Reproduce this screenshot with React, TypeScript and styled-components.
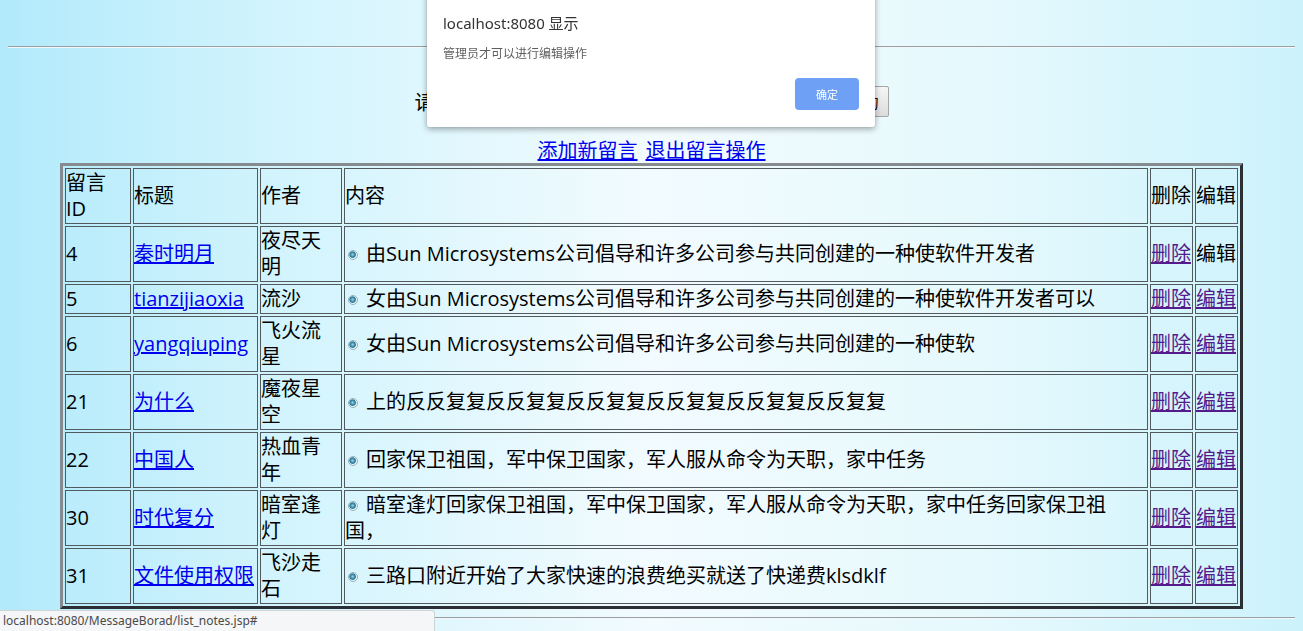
import React from 'react';
import styled, { createGlobalStyle } from 'styled-components';

const GlobalStyle = createGlobalStyle`
  html {
    min-height: 100%;
    background: linear-gradient(to right, #b2eafb 0%, #d3f4fd 22%, #f2fbfe 50%, #e6f9fd 75%, #ccf2fc 100%);
  }
  body {
    margin: 8px;
    font-family: "Open Sans", "Noto Sans CJK SC", sans-serif;
    color: #000;
  }
`;

const Rule = styled.hr<{ $top: number }>`
  margin: ${({ $top }) => $top}px 0 0;
  height: 0;
  border: none;
  border-top: 1px solid #9a9fa3;
  border-bottom: 1px solid #f2f8fa;
`;

const SearchRow = styled.form`
  display: flex;
  justify-content: center;
  align-items: center;
  margin-top: 38px;
  height: 31px;
  font-family: "Liberation Serif", "Noto Sans CJK SC", serif;
  font-size: 20px;
`;

const SearchInput = styled.input`
  width: 250px;
  height: 24px;
  margin: 0 4px;
  border: 1px solid #a9a9a9;
  background: #fff;
`;

const SearchButton = styled.button`
  width: 50px;
  height: 31px;
  border: 1px solid #a6a6a6;
  border-radius: 2px;
  background: linear-gradient(#f6f6f6, #dcdcdc);
  font-family: "Noto Sans CJK SC", sans-serif;
  font-size: 15px;
`;

const LinkBar = styled.div`
  display: flex;
  justify-content: center;
  gap: 8px;
  margin-top: 21px;
  font-family: "Noto Sans CJK SC", sans-serif;
  font-size: 20px;
  line-height: 24px;
`;

const PageLink = styled.a`
  color: #0000ee;
  text-decoration: underline;
`;

const Grid = styled.table`
  margin: 1px auto 0;
  width: 1183px;
  table-layout: fixed;
  border: 3px solid;
  border-color: #858b8f #2b2f33 #2b2f33 #858b8f;
  border-spacing: 2px;
  font-size: 20px;
  line-height: 26px;
`;

const Cell = styled.td<{ $w?: number }>`
  ${({ $w }) => ($w ? `width: ${$w}px;` : '')}
  box-sizing: border-box;
  padding: 1px 1px 1px 0;
  border: 1px solid #535a5e;
  vertical-align: middle;
  text-align: left;
  font-weight: normal;
  word-break: break-all;
`;

const ContentCell = styled(Cell)`
  padding-right: 7px;
`;

const TitleLink = styled.a`
  color: #0000ee;
  text-decoration: underline;
  white-space: nowrap;
`;

const ActionLink = styled.a`
  color: #551a8b;
  text-decoration: underline;
  white-space: nowrap;
`;

const Plain = styled.span`
  white-space: nowrap;
`;

const Bullet = styled.span`
  display: inline-block;
  width: 8px;
  height: 8px;
  margin: 0 8px 2px 3px;
  border-radius: 50%;
  border: 1px solid #9bb0b8;
  background: radial-gradient(circle at 45% 45%, #9fd3e6 0, #1d7594 45%, #e9f4f7 60%);
  vertical-align: middle;
`;

const Dialog = styled.div`
  position: fixed;
  left: 427px;
  top: -12px;
  width: 448px;
  height: 139px;
  box-sizing: border-box;
  padding: 24px 16px 0;
  background: #fff;
  border-radius: 2px;
  box-shadow: 0 2px 6px rgba(0, 0, 0, 0.35), 0 0 1px rgba(0, 0, 0, 0.3);
  font-family: "Noto Sans", "Noto Sans CJK SC", sans-serif;
`;

const DialogTitle = styled.div`
  font-size: 15px;
  line-height: 22px;
  color: #333;
`;

const DialogText = styled.div`
  margin-top: 11px;
  font-size: 12px;
  line-height: 18px;
  color: #5f5f5f;
`;

const DialogFooter = styled.div`
  display: flex;
  justify-content: flex-end;
  margin-top: 15px;
`;

const OkButton = styled.button`
  width: 64px;
  height: 32px;
  border: none;
  border-radius: 4px;
  background: #6ea0f6;
  color: #fff;
  font-family: "Noto Sans CJK SC", sans-serif;
  font-size: 11px;
`;

const StatusBar = styled.div`
  position: fixed;
  left: 0;
  bottom: 0;
  width: 431px;
  height: 20px;
  background: #f4f6f7;
  border-top: 1px solid #cfd4d6;
  border-right: 1px solid #cfd4d6;
  border-top-right-radius: 3px;
  padding-left: 3px;
  font-family: "Noto Sans", sans-serif;
  font-size: 12px;
  line-height: 20px;
  color: #4a4a4a;
`;

type Note = {
  id: number;
  title: string;
  author: string;
  content: string;
  editLink: boolean;
};

const notes: Note[] = [
  { id: 4, title: '秦时明月', author: '夜尽天明', content: '由Sun Microsystems公司倡导和许多公司参与共同创建的一种使软件开发者', editLink: false },
  { id: 5, title: 'tianzijiaoxia', author: '流沙', content: '女由Sun Microsystems公司倡导和许多公司参与共同创建的一种使软件开发者可以', editLink: true },
  { id: 6, title: 'yangqiuping', author: '飞火流星', content: '女由Sun Microsystems公司倡导和许多公司参与共同创建的一种使软', editLink: true },
  { id: 21, title: '为什么', author: '魔夜星空', content: '上的反反复复反反复复反反复复反反复复反反复复反反复复', editLink: true },
  { id: 22, title: '中国人', author: '热血青年', content: '回家保卫祖国，军中保卫国家，军人服从命令为天职，家中任务', editLink: true },
  { id: 30, title: '时代复分', author: '暗室逢灯', content: '暗室逢灯回家保卫祖国，军中保卫国家，军人服从命令为天职，家中任务回家保卫祖国，', editLink: true },
  { id: 31, title: '文件使用权限', author: '飞沙走石', content: '三路口附近开始了大家快速的浪费绝买就送了快递费klsdklf', editLink: true },
];

export default function App() {
  return (
    <>
      <GlobalStyle />
      <Rule $top={38} />
      <SearchRow onSubmit={(e) => e.preventDefault()}>
        <span>请输入查询内容：</span>
        <SearchInput type="text" />
        <SearchButton type="submit">查询</SearchButton>
      </SearchRow>
      <LinkBar>
        <PageLink href="#">添加新留言</PageLink>
        <PageLink href="#">退出留言操作</PageLink>
      </LinkBar>
      <Grid>
        <thead>
          <tr>
            <Cell as="th" $w={66}>
              留言
              <br />
              ID
            </Cell>
            <Cell as="th" $w={125}>标题</Cell>
            <Cell as="th" $w={82}>作者</Cell>
            <Cell as="th" $w={804}>内容</Cell>
            <Cell as="th" $w={43}>删除</Cell>
            <Cell as="th" $w={43}>编辑</Cell>
          </tr>
        </thead>
        <tbody>
          {notes.map((n) => (
            <tr key={n.id}>
              <Cell>{n.id}</Cell>
              <Cell>
                <TitleLink href="#">{n.title}</TitleLink>
              </Cell>
              <Cell>{n.author}</Cell>
              <ContentCell>
                <Bullet />
                {n.content}
              </ContentCell>
              <Cell>
                <ActionLink href="#">删除</ActionLink>
              </Cell>
              <Cell>
                {n.editLink ? <ActionLink href="#">编辑</ActionLink> : <Plain>编辑</Plain>}
              </Cell>
            </tr>
          ))}
        </tbody>
      </Grid>
      <Rule $top={8} />
      <Dialog>
        <DialogTitle>localhost:8080 显示</DialogTitle>
        <DialogText>管理员才可以进行编辑操作</DialogText>
        <DialogFooter>
          <OkButton>确定</OkButton>
        </DialogFooter>
      </Dialog>
      <StatusBar>localhost:8080/MessageBorad/list_notes.jsp#</StatusBar>
    </>
  );
}
